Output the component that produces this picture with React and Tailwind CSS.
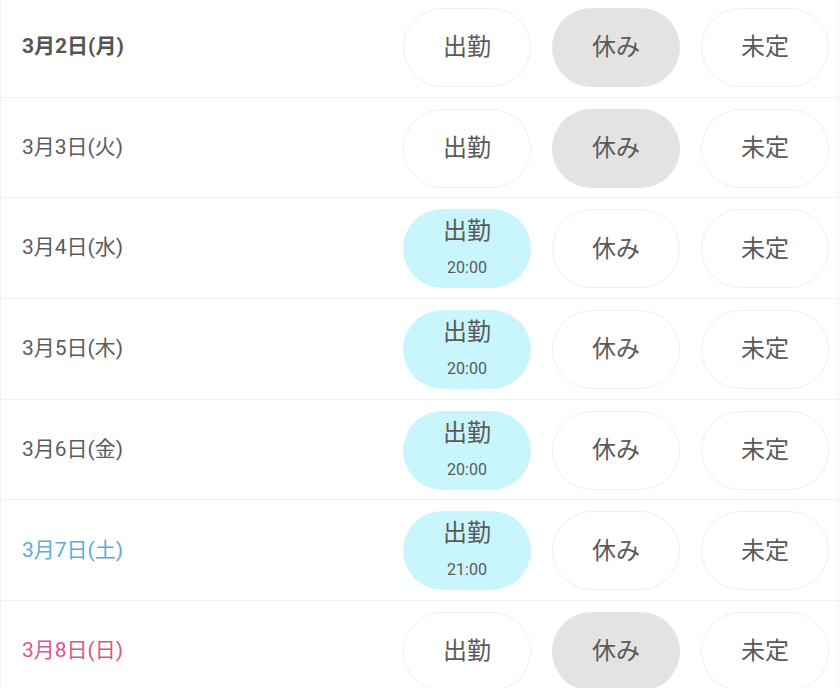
import React from "react";

const rows = [
  { date: "3月2日(月)", color: "text-[#555555]", bold: true, sel: "rest" },
  { date: "3月3日(火)", color: "text-[#5c5c5c]", sel: "rest" },
  { date: "3月4日(水)", color: "text-[#5c5c5c]", sel: "work", time: "20:00" },
  { date: "3月5日(木)", color: "text-[#5c5c5c]", sel: "work", time: "20:00" },
  { date: "3月6日(金)", color: "text-[#5c5c5c]", sel: "work", time: "20:00" },
  { date: "3月7日(土)", color: "text-[#5aaed8]", sel: "work", time: "21:00" },
  { date: "3月8日(日)", color: "text-[#d9588a]", sel: "rest" },
];

function Btn({ active, activeBg, children, sub }) {
  return (
    <div
      className={
        "w-[128px] h-[79px] rounded-full flex flex-col items-center justify-center text-[#5a5a5a] " +
        (active ? activeBg : "bg-white border border-[#eeeeee]")
      }
    >
      <span className={"text-[24px] leading-[30px]" + (sub ? " -mt-[3px]" : "")}>{children}</span>
      {sub && <span className="text-[16px] leading-[20px] mt-[12px]">{sub}</span>}
    </div>
  );
}

export default function App() {
  return (
    <div
      className="w-[840px] h-[688px] overflow-hidden bg-white"
      style={{ fontFamily: 'Roboto, "Noto Sans CJK JP", sans-serif' }}
    >
      <div className="-mt-[3px] border-l border-r border-[#f2f2f2] mr-[1px]">
        {rows.map((r, i) => (
          <div
            key={i}
            className="h-[100.7px] box-border border-b border-[#f0f0f0] flex items-center pl-[21px] pr-[9px]"
          >
            <div className={"flex-1 text-[21px] " + r.color + (r.bold ? " font-bold" : "")}>
              {r.date}
            </div>
            <div className="flex gap-[21px] pt-[1px]">
              <Btn active={r.sel === "work"} activeBg="bg-[#c8f6fc]" sub={r.time}>
                出勤
              </Btn>
              <Btn active={r.sel === "rest"} activeBg="bg-[#e3e3e3]">
                休み
              </Btn>
              <Btn active={false}>未定</Btn>
            </div>
          </div>
        ))}
      </div>
    </div>
  );
}
